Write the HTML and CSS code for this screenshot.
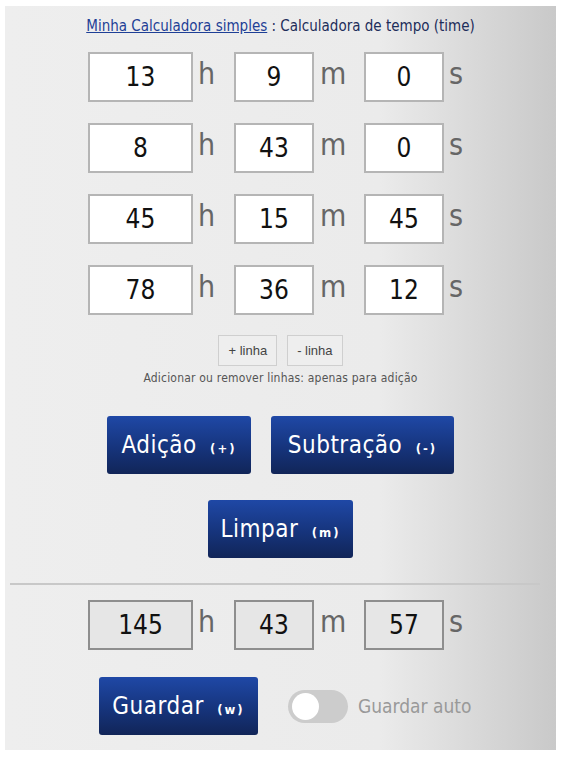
FILE: index.html
```html
<!DOCTYPE html>
<html lang="pt">
<head>
    <meta charset="UTF-8">
    <title>Calculadora de tempo</title>
    <link rel="stylesheet" href="styles.css">
</head>
<body>
    <div class="panel">
        <div class="title">
            <a href="#" class="home-link">Minha Calculadora simples</a> : Calculadora de tempo (time)
        </div>

        <div class="rows">
            <div class="row">
                <input class="field field-h" type="text" value="13"><span class="unit unit-h">h</span>
                <input class="field" type="text" value="9"><span class="unit unit-m">m</span>
                <input class="field" type="text" value="0"><span class="unit">s</span>
            </div>
            <div class="row">
                <input class="field field-h" type="text" value="8"><span class="unit unit-h">h</span>
                <input class="field" type="text" value="43"><span class="unit unit-m">m</span>
                <input class="field" type="text" value="0"><span class="unit">s</span>
            </div>
            <div class="row">
                <input class="field field-h" type="text" value="45"><span class="unit unit-h">h</span>
                <input class="field" type="text" value="15"><span class="unit unit-m">m</span>
                <input class="field" type="text" value="45"><span class="unit">s</span>
            </div>
            <div class="row">
                <input class="field field-h" type="text" value="78"><span class="unit unit-h">h</span>
                <input class="field" type="text" value="36"><span class="unit unit-m">m</span>
                <input class="field" type="text" value="12"><span class="unit">s</span>
            </div>
        </div>

        <div class="line-buttons">
            <button class="small-btn">+ linha</button>
            <button class="small-btn">- linha</button>
        </div>
        <div class="hint">Adicionar ou remover linhas: apenas para adição</div>

        <div class="actions">
            <button class="big-btn btn-add">Adição <small>(+)</small></button>
            <button class="big-btn btn-sub">Subtração <small>(-)</small></button>
        </div>
        <div class="actions">
            <button class="big-btn btn-clear">Limpar <small>(m)</small></button>
        </div>

        <hr class="divider">

        <div class="row result-row">
            <input class="field field-h result" type="text" value="145" readonly><span class="unit unit-h">h</span>
            <input class="field result" type="text" value="43" readonly><span class="unit unit-m">m</span>
            <input class="field result" type="text" value="57" readonly><span class="unit">s</span>
        </div>

        <div class="save-row">
            <button class="big-btn btn-save">Guardar <small>(w)</small></button>
            <label class="toggle">
                <span class="switch"><span class="knob"></span></span>
                <span class="toggle-label">Guardar auto</span>
            </label>
        </div>
    </div>
</body>
</html>
```

FILE: styles.css
```css
body {
    margin: 0;
    background-color: #fff;
    font-family: "DejaVu Sans Condensed", "DejaVu Sans", sans-serif;
}
.panel {
    margin: 6px 5px 0 5px;
    height: 744px;
    box-sizing: border-box;
    padding-top: 10px;
    background: linear-gradient(to right, #eeeeee 0%, #ebebeb 68%, #c9c9c9 100%);
}
.title {
    text-align: center;
    font-size: 15px;
    line-height: 20px;
    color: #1d2d5a;
}
.home-link {
    color: #1e3f96;
    text-decoration: underline;
}
.rows {
    margin-top: 16px;
    display: flex;
    flex-direction: column;
    gap: 21px;
}
.row {
    display: flex;
    align-items: flex-start;
    padding-left: 83px;
}
.field {
    width: 80px;
    height: 50px;
    box-sizing: border-box;
    border: 2px solid #b5b5b5;
    background-color: #fff;
    text-align: center;
    font-family: "DejaVu Sans Condensed", "DejaVu Sans", sans-serif;
    font-size: 26px;
    color: #111;
    padding: 0;
}
.field-h {
    width: 105px;
}
.unit {
    width: 41px;
    padding: 2px 0 0 5px;
    box-sizing: border-box;
    font-size: 30px;
    line-height: 40px;
    color: #666;
}
.unit-m {
    width: 50px;
    padding-left: 6px;
}
.line-buttons {
    margin-top: 20px;
    display: flex;
    justify-content: center;
    gap: 10px;
}
.small-btn {
    height: 31px;
    padding: 0 9px;
    border: 1px solid #cfcfcf;
    background-color: #eee;
    color: #444;
    font-family: "Liberation Sans", Arial, sans-serif;
    font-size: 13px;
}
.hint {
    margin-top: 5px;
    text-align: center;
    font-size: 12px;
    letter-spacing: 0.2px;
    color: #555;
}
.actions {
    display: flex;
    justify-content: center;
    gap: 20px;
    margin-top: 31px;
}
.actions + .actions {
    margin-top: 26px;
}
.big-btn {
    height: 58px;
    border: none;
    border-radius: 3px;
    background: linear-gradient(to bottom, #1f48a6 0%, #16347c 55%, #112558 100%);
    color: #fff;
    font-family: "DejaVu Sans Condensed", "DejaVu Sans", sans-serif;
    font-size: 24px;
    letter-spacing: 0.5px;
    padding: 0;
}
.big-btn small {
    font-size: 13px;
    font-weight: bold;
    letter-spacing: 2px;
    margin-left: 6px;
}
.btn-add {
    width: 144px;
}
.btn-sub {
    width: 183px;
}
.btn-clear {
    width: 145px;
}
.divider {
    margin: 25px 16px 0 5px;
    border: none;
    border-top: 2px solid #c8c8c8;
}
.result-row {
    margin-top: 15px;
}
.field.result {
    background-color: #e6e6e6;
    border-color: #8e8e8e;
}
.save-row {
    margin-top: 27px;
    display: flex;
    align-items: center;
    padding-left: 94px;
}
.btn-save {
    width: 159px;
}
.toggle {
    display: flex;
    align-items: center;
    margin-left: 30px;
}
.switch {
    width: 60px;
    height: 33px;
    border-radius: 17px;
    background-color: #cccccc;
    position: relative;
}
.knob {
    position: absolute;
    left: 4px;
    top: 3px;
    width: 27px;
    height: 27px;
    border-radius: 50%;
    background-color: #fff;
}
.toggle-label {
    margin-left: 10px;
    font-size: 19px;
    color: #999;
}
```
